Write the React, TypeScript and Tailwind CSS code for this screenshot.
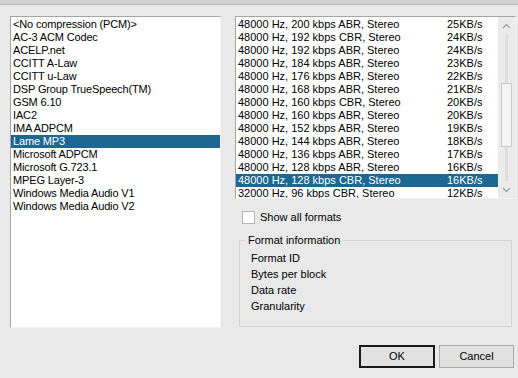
import React from 'react'

const codecs = [
  '<No compression (PCM)>',
  'AC-3 ACM Codec',
  'ACELP.net',
  'CCITT A-Law',
  'CCITT u-Law',
  'DSP Group TrueSpeech(TM)',
  'GSM 6.10',
  'IAC2',
  'IMA ADPCM',
  'Lame MP3',
  'Microsoft ADPCM',
  'Microsoft G.723.1',
  'MPEG Layer-3',
  'Windows Media Audio V1',
  'Windows Media Audio V2',
]

const formats: [string, string][] = [
  ['48000 Hz, 200 kbps ABR, Stereo', '25KB/s'],
  ['48000 Hz, 192 kbps CBR, Stereo', '24KB/s'],
  ['48000 Hz, 192 kbps ABR, Stereo', '24KB/s'],
  ['48000 Hz, 184 kbps ABR, Stereo', '23KB/s'],
  ['48000 Hz, 176 kbps ABR, Stereo', '22KB/s'],
  ['48000 Hz, 168 kbps ABR, Stereo', '21KB/s'],
  ['48000 Hz, 160 kbps CBR, Stereo', '20KB/s'],
  ['48000 Hz, 160 kbps ABR, Stereo', '20KB/s'],
  ['48000 Hz, 152 kbps ABR, Stereo', '19KB/s'],
  ['48000 Hz, 144 kbps ABR, Stereo', '18KB/s'],
  ['48000 Hz, 136 kbps ABR, Stereo', '17KB/s'],
  ['48000 Hz, 128 kbps ABR, Stereo', '16KB/s'],
  ['48000 Hz, 128 kbps CBR, Stereo', '16KB/s'],
  ['32000 Hz, 96 kbps CBR, Stereo', '12KB/s'],
]

const info = ['Format ID', 'Bytes per block', 'Data rate', 'Granularity']

function Chevron({ up }: { up?: boolean }) {
  return (
    <svg width="9" height="6" viewBox="0 0 9 6" className="block">
      <path
        d={up ? 'M1 5 L4.5 1.5 L8 5' : 'M1 1 L4.5 4.5 L8 1'}
        fill="none"
        stroke="#9a9a9a"
        strokeWidth="1.2"
      />
    </svg>
  )
}

export default function App() {
  return (
    <div
      className="w-[518px] h-[378px] bg-[#e9e9e9] text-black text-[11px] leading-[13px] overflow-hidden"
      style={{ fontFamily: '"Liberation Sans", Arial, sans-serif' }}
    >
      {/* title strip */}
      <div className="h-[5px] bg-[#d2d2d2] border-b border-[#bdbdbd]" />

      <div className="flex pt-[11px] pl-[10px]">
        {/* codec list */}
        <div className="w-[211px] h-[312px] bg-white border border-t-[#a5a5a5] border-l-[#a5a5a5] border-r-[#f2f2f2] border-b-[#f2f2f2] pt-[1px]">
          {codecs.map((c) => (
            <div
              key={c}
              className={`h-[13px] pl-[2px] whitespace-nowrap tracking-[-0.15px] ${c === 'Lame MP3' ? 'bg-[#1c6893] text-white' : ''}`}
            >
              {c}
            </div>
          ))}
        </div>

        {/* right column */}
        <div className="ml-[14px] w-[281px]">
          <div className="flex h-[183px] bg-white border border-t-[#a5a5a5] border-l-[#a5a5a5] border-r-[#f2f2f2] border-b-[#f2f2f2] overflow-hidden">
            <div className="flex-1 pt-[1px] overflow-hidden">
              {formats.map(([f, r], i) => (
                <div
                  key={i}
                  className={`flex h-[13px] pl-[2px] whitespace-nowrap ${i === 12 ? 'bg-[#1c6893] text-white' : ''}`}
                >
                  <span className="w-[209px]">{f}</span>
                  <span>{r}</span>
                </div>
              ))}
            </div>
            {/* scrollbar */}
            <div className="w-[17px] bg-[#ebebeb] flex flex-col items-center">
              <div className="h-[17px] flex items-center justify-center">
                <Chevron up />
              </div>
              <div className="flex-1 w-full flex flex-col items-center">
                <div className="w-[3px] h-[49px] bg-[#dedede]" />
                <div className="w-[11px] h-[64px] bg-[#f4f4f4] border border-[#c9c9c9]" />
                <div className="w-[3px] flex-1 bg-[#dedede]" />
              </div>
              <div className="h-[17px] flex items-center justify-center">
                <Chevron />
              </div>
            </div>
          </div>

          {/* checkbox */}
          <div className="flex items-center mt-[12px] ml-[7px] h-[13px]">
            <div className="w-[13px] h-[13px] bg-white border border-[#b4b4b4]" />
            <span className="ml-[5px]">Show all formats</span>
          </div>

          {/* group box */}
          <fieldset className="ml-[4px] w-[273px] h-[93px] mt-[10px] border border-[#d4d4d4] p-0">
            <legend className="ml-[6px] px-[2px] leading-[13px]">Format information</legend>
            <div className="flex flex-col gap-[3px] pl-[11px] pt-[5px]">
              {info.map((t) => (
                <div key={t} className="h-[13px] leading-[13px]">
                  {t}
                </div>
              ))}
            </div>
          </fieldset>
        </div>
      </div>

      {/* buttons */}
      <div className="flex justify-end gap-[4px] mt-[17px] pr-[4px]">
        <button className="w-[76px] h-[23px] bg-[#e1e1e1] border-2 border-[#1a1a1a] text-black text-[11px]">
          OK
        </button>
        <button className="w-[75px] h-[23px] bg-[#e1e1e1] border border-[#adadad] text-black text-[11px]">
          Cancel
        </button>
      </div>
    </div>
  )
}
